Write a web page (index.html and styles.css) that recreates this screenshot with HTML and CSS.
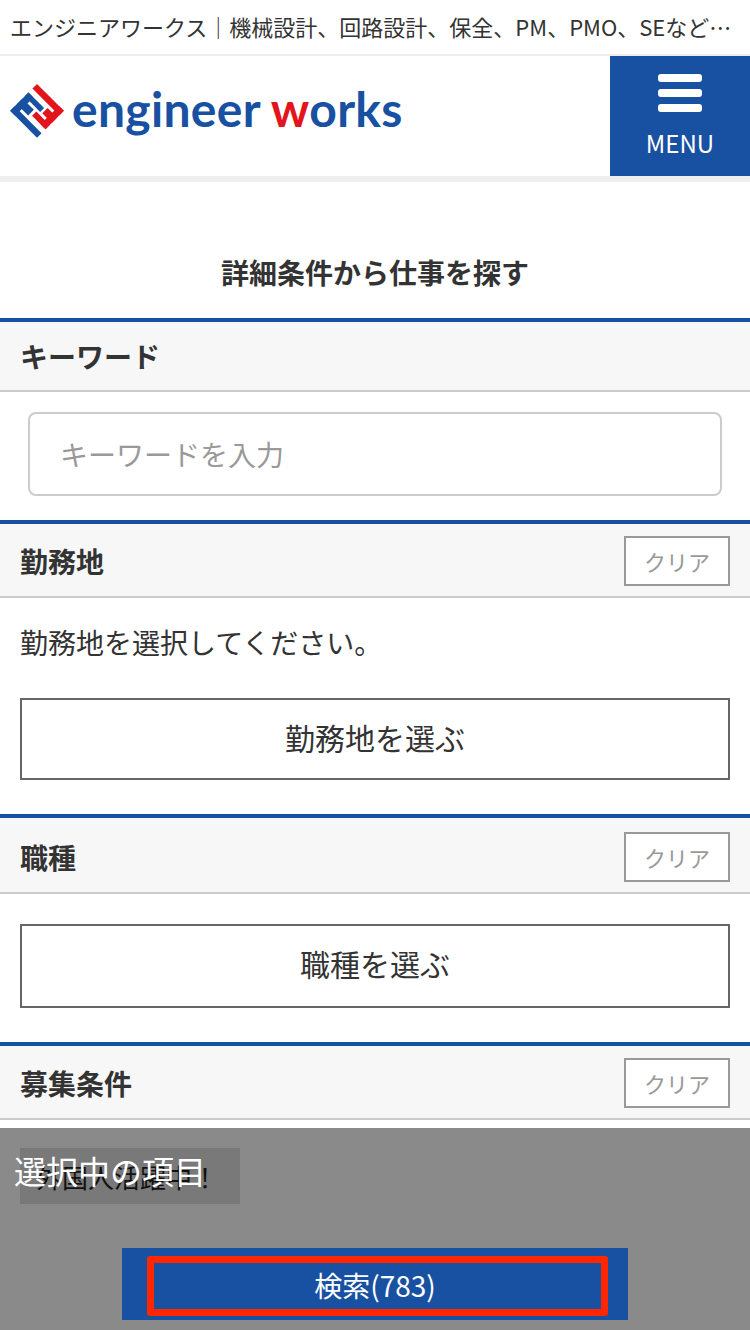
FILE: index.html
```html
<!DOCTYPE html>
<html lang="ja">
<head>
<meta charset="utf-8">
<title>詳細条件から仕事を探す</title>
<link rel="stylesheet" href="styles.css">
</head>
<body>
<div class="page">
  <div class="topline"><p class="topline-text">エンジニアワークス｜機械設計、回路設計、保全、PM、PMO、SEなどの求人サイト</p></div>
  <header class="header">
    <div class="logo">
      <svg class="logo-mark" viewBox="0 0 56 56" width="56" height="56" aria-hidden="true">
        <g transform="translate(28 1) rotate(45)">
          <g fill="#1850a2">
            <rect x="0" y="12" width="7" height="26"/>
            <rect x="0" y="12" width="22" height="5.500"/>
            <rect x="0" y="20.500" width="16" height="8"/>
            <rect x="0" y="31.500" width="38" height="6.500"/>
          </g>
          <g fill="#e2141c">
            <rect x="31" y="0" width="7" height="26"/>
            <rect x="0" y="0" width="38" height="6.500"/>
            <rect x="24.500" y="9.500" width="13.500" height="7.500"/>
            <rect x="19" y="20" width="19" height="6"/>
          </g>
        </g>
      </svg>
      <span class="logo-text"><span class="logo-blue">engineer</span> <span class="logo-red">w</span><span class="logo-blue">orks</span></span>
    </div>
    <div class="menu">
      <span class="menu-bars"><i></i><i></i><i></i></span>
      <span class="menu-label">MENU</span>
    </div>
  </header>

  <main>
    <h1 class="title">詳細条件から仕事を探す</h1>

    <section class="section">
      <div class="sec-head sec-head-plain"><h2>キーワード</h2></div>
      <div class="keyword-wrap"><input class="keyword" type="text" placeholder="キーワードを入力"></div>
    </section>

    <section class="section">
      <div class="sec-head"><h2>勤務地</h2><span class="clear">クリア</span></div>
      <div class="sec-body">
        <p class="note">勤務地を選択してください。</p>
        <div class="choose choose-place">勤務地を選ぶ</div>
      </div>
    </section>

    <section class="section">
      <div class="sec-head sec-head-tall"><h2>職種</h2><span class="clear">クリア</span></div>
      <div class="sec-body sec-body-job">
        <div class="choose choose-job">職種を選ぶ</div>
      </div>
    </section>

    <section class="section">
      <div class="sec-head"><h2>募集条件</h2><span class="clear">クリア</span></div>
    </section>
  </main>

  <div class="overlay">
    <div class="under-box"><span class="under-text">外国人活躍中！</span></div>
    <p class="overlay-title">選択中の項目</p>
    <div class="search-wrap"><div class="search-btn">検索(783)</div></div>
  </div>
</div>
</body>
</html>
```
FILE: styles.css
```css
* { box-sizing: border-box; }
html, body { margin: 0; padding: 0; }
body {
  background: #fff;
  color: #333;
  font-family: "Noto Sans CJK JP", "Noto Sans", sans-serif;
}
.page { position: relative; width: 750px; height: 1330px; overflow: hidden; }
.topline { height: 56px; border-bottom: 2px solid #eee; padding: 0 10px; display: flex; align-items: flex-start; }
.topline-text { margin: 0; font-size: 22px; line-height: 52px; white-space: nowrap; overflow: hidden; text-overflow: ellipsis; }
.header { height: 126px; border-bottom: 6px solid #eee; display: flex; justify-content: space-between; }
.logo { display: flex; align-items: center; padding-left: 9px; gap: 7px; height: 110px; }
.logo-mark { flex: none; }
.logo-text { font-family: "Lato", sans-serif; font-weight: 700; font-size: 48px; line-height: 1; letter-spacing: 0.3px; white-space: nowrap; padding-bottom: 4px; }
.logo-blue { color: #1850a2; }
.logo-red { color: #e2141c; }
.menu { width: 140px; height: 120px; background: #1850a2; color: #fff; display: flex; flex-direction: column; align-items: center; padding-top: 18px; }
.menu-bars { display: flex; flex-direction: column; gap: 7px; }
.menu-bars i { display: block; width: 44px; height: 8px; border-radius: 3px; background: #fff; }
.menu-label { font-size: 24px; line-height: 36px; margin-top: 13px; }
.title { margin: 0; height: 136px; padding-top: 70px; text-align: center; font-size: 28px; line-height: 40px; font-weight: 700; }
.section { border-top: 4px solid #1850a2; }
.sec-head { height: 74px; background: #f7f7f7; border-bottom: 2px solid #ccc; padding: 2px 20px 0; display: flex; align-items: center; justify-content: space-between; }
.sec-head-plain { height: 70px; padding-top: 0; }
.sec-head-tall { height: 76px; padding-top: 4px; }
.sec-head h2 { margin: 0; font-size: 28px; line-height: 40px; font-weight: 700; }
.clear { width: 106px; height: 50px; border: 2px solid #999; background: #fff; color: #999; font-size: 22px; line-height: 46px; text-align: center; }
.keyword-wrap { padding: 20px 28px 24px; }
.keyword { display: block; width: 100%; height: 84px; border: 2px solid #ccc; border-radius: 8px; padding: 0 30px; font-family: inherit; font-size: 28px; background: #fff; outline: none; }
.keyword::placeholder { color: #999; opacity: 1; }
.sec-body { padding: 0 20px 34px; }
.sec-body-job { padding-top: 30px; }
.note { margin: 0; padding-top: 24px; height: 100px; font-size: 28px; line-height: 40px; }
.choose { border: 2px solid #666; display: flex; align-items: center; justify-content: center; color: #333; background: #fff; font-size: 30px; padding-bottom: 4px; }
.choose-place { height: 82px; }
.choose-job { height: 84px; padding-bottom: 6px; }
.overlay { position: absolute; left: 0; right: 0; top: 1128px; bottom: 0; background: rgba(0,0,0,0.46); }
.under-box { position: absolute; left: 20px; top: 20px; width: 220px; height: 56px; background: rgba(0,0,0,0.12); display: flex; align-items: center; justify-content: center; padding-right: 6px; }
.under-text { color: #111; font-size: 26px; white-space: nowrap; }
.overlay-title { position: absolute; left: 14px; top: 18px; margin: 0; color: #fff; font-size: 32px; line-height: 48px; }
.search-wrap { position: absolute; left: 122px; top: 120px; width: 506px; height: 72px; background: #1850a2; padding: 8px 20px 0 25px; }
.search-btn { height: 60px; border: 7px solid #ff2600; border-radius: 3px; color: #fff; font-size: 28px; line-height: 44px; text-align: center; padding-right: 5px; }
```
